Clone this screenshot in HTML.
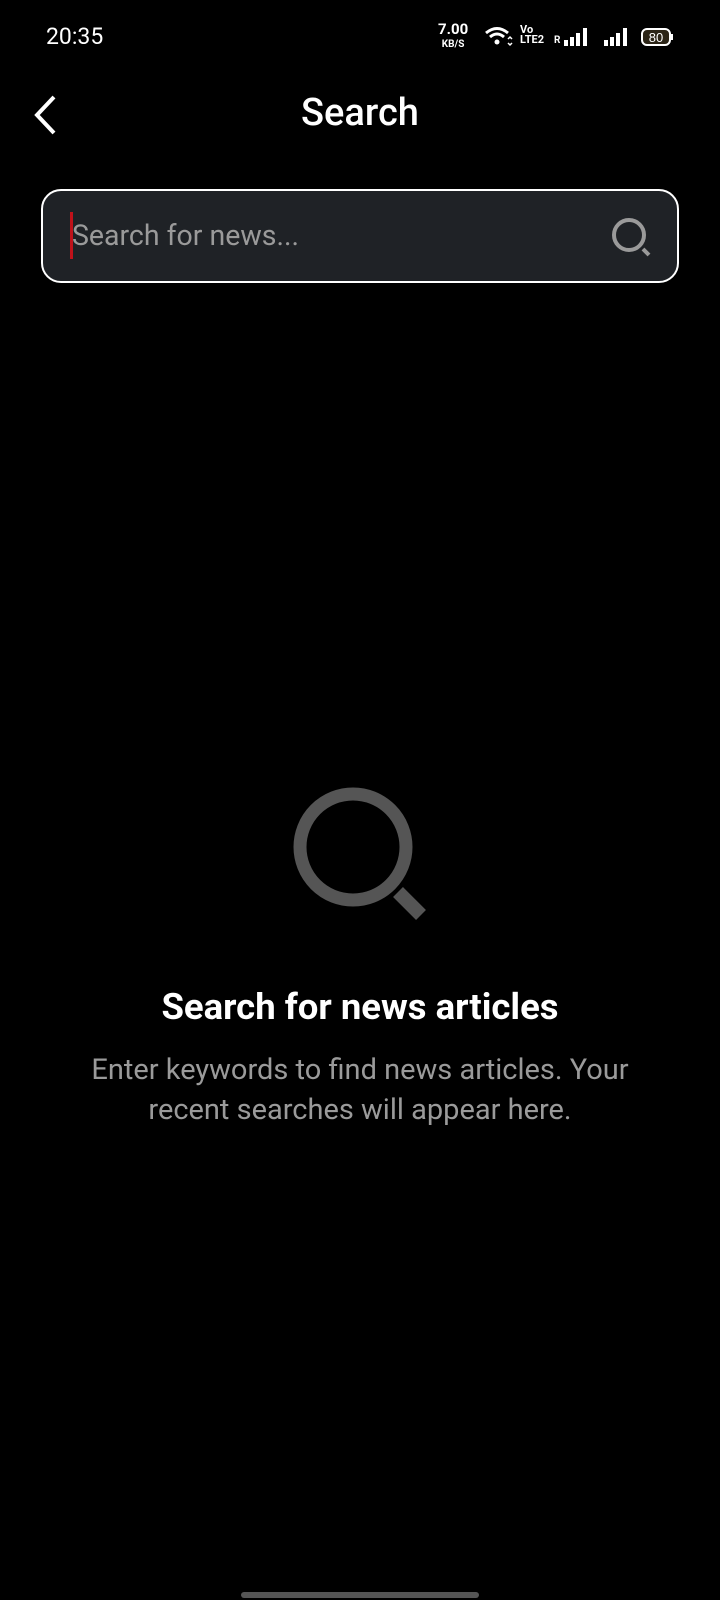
<!DOCTYPE html>
<html><head><meta charset="utf-8"><style>
body{margin:0;width:720px;height:1600px;background:#000;position:relative;overflow:hidden;font-family:"Roboto","Liberation Sans",sans-serif;color:#fff}
.a{position:absolute}
</style></head><body>
<div class="a" style="left:46px;top:23px;font-size:23px">20:35</div>
<div class="a" style="left:438px;top:23px;font-size:15px;font-weight:bold;line-height:13px;text-align:center">7.00<br><span style="font-size:10px">KB/S</span></div>
<svg class="a" style="left:484px;top:25px" width="30" height="24" viewBox="0 0 30 24"><path d="M2 8 Q13 -1 24 8" stroke="#fff" stroke-width="3" fill="none"/><path d="M6 12 Q13 6 20 12" stroke="#fff" stroke-width="3" fill="none"/><circle cx="13" cy="17" r="2.5" fill="#fff"/><path d="M24 14l2-2 2 2M24 18l2 2 2-2" stroke="#fff" stroke-width="1.5" fill="none"/></svg>
<div class="a" style="left:520px;top:25px;font-size:11px;font-weight:bold;line-height:10px">Vo<br>LTE2</div>
<div class="a" style="left:554px;top:35px;font-size:10px;font-weight:bold">R</div>
<svg class="a" style="left:564px;top:26px" width="110" height="22"><rect x="0" y="14" width="4" height="6" fill="#fff"/><rect x="6" y="11" width="4" height="9" fill="#fff"/><rect x="12" y="7" width="4" height="13" fill="#fff"/><rect x="19" y="2" width="4" height="18" fill="#fff"/><rect x="40" y="14" width="4" height="6" fill="#fff"/><rect x="46" y="11" width="4" height="9" fill="#fff"/><rect x="52" y="7" width="4" height="13" fill="#fff"/><rect x="59" y="2" width="4" height="18" fill="#fff"/><rect x="78" y="3" width="28" height="16" rx="5" fill="#2b2416" stroke="#fff" stroke-width="2"/><rect x="107" y="8" width="2" height="6" fill="#fff"/><text x="92" y="16" font-size="13" fill="#fff" text-anchor="middle" font-family="Liberation Sans">80</text></svg>
<svg class="a" style="left:30px;top:94px" width="30" height="42"><path d="M24 3 L7 21 L24 39" stroke="#fff" stroke-width="4" fill="none"/></svg>
<div class="a" style="left:0;width:720px;top:91px;text-align:center;font-size:38px;font-weight:500">Search</div>
<div class="a" style="left:41px;top:189px;width:634px;height:90px;border:2px solid #fff;border-radius:20px;background:#1f2226"></div>
<div class="a" style="left:70px;top:212px;width:3px;height:47px;background:#c0121a"></div>
<div class="a" style="left:72px;top:219px;font-size:28.5px;color:#9a9a9a">Search for news...</div>
<svg class="a" style="left:608px;top:214px" width="48" height="48"><circle cx="21" cy="21" r="15" stroke="#9a9a9a" stroke-width="4" fill="none"/><path d="M35 35l6 6" stroke="#9a9a9a" stroke-width="4"/></svg>
<svg class="a" style="left:280px;top:775px" width="170" height="160"><circle cx="73" cy="72" r="53" stroke="#555" stroke-width="13" fill="none"/><path d="M118 117l23 23" stroke="#555" stroke-width="14"/></svg>
<div class="a" style="left:0;width:720px;top:985px;text-align:center;font-size:36.5px;font-weight:bold">Search for news articles</div>
<div class="a" style="left:0;width:720px;top:1050px;text-align:center;font-size:29px;line-height:40px;color:#9a9a9a">Enter keywords to find news articles. Your<br>recent searches will appear here.</div>
<div class="a" style="left:241px;top:1592px;width:238px;height:6px;border-radius:3px;background:#555"></div>
</body></html>
